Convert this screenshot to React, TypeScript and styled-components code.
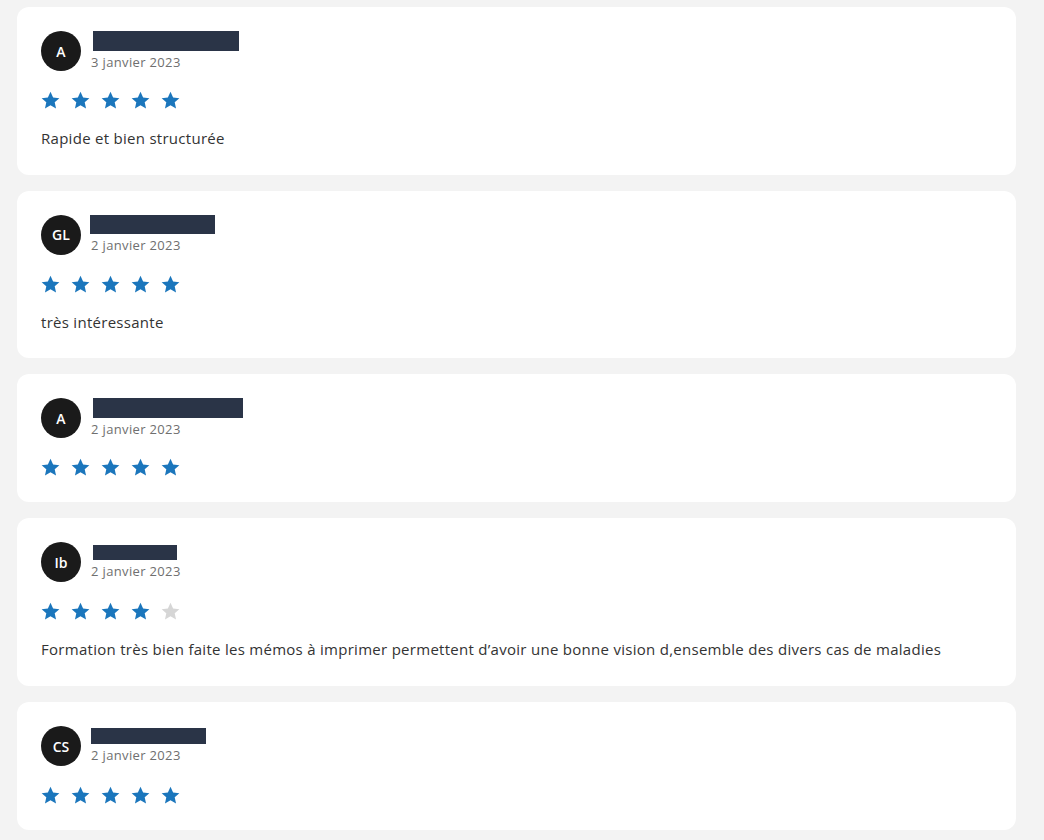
import styled, { createGlobalStyle } from "styled-components";

const Global = createGlobalStyle`
    html, body {
        margin: 0;
        padding: 0;
        background: #f3f3f3;
    }
    body {
        font-family: 'Open Sans', 'Liberation Sans', sans-serif;
        color: #333;
    }
`;

const List = styled.div`
    width: 999px;
    padding: 7px 0 10px 17px;
    display: flex;
    flex-direction: column;
    gap: 16px;
`;

const Card = styled.article`
    background: #fff;
    border-radius: 12px;
    padding: 24px 24px 25px;
    display: flex;
    flex-direction: column;
`;

const Head = styled.div`
    display: flex;
    align-items: center;
    gap: 10px;
`;

const Avatar = styled.div`
    width: 40px;
    height: 40px;
    border-radius: 50%;
    background: #1a1a1a;
    color: #fff;
    font-size: 14px;
    font-weight: 600;
    display: flex;
    align-items: center;
    justify-content: center;
    flex-shrink: 0;
`;

const Who = styled.div`
    display: flex;
    flex-direction: column;
    gap: 2px;
`;

const NameBar = styled.div<{ $w: number; $h: number; $x: number }>`
    width: ${p => p.$w}px;
    height: ${p => p.$h}px;
    margin-left: ${p => p.$x}px;
    background: #2a3447;
`;

const Date = styled.span`
    font-size: 13px;
    letter-spacing: 0.35px;
    color: #6f6f6f;
    line-height: 18px;
`;

const Stars = styled.div`
    display: flex;
    gap: 11px;
    margin-top: 20px;
    height: 19px;
`;

const Comment = styled.p`
    margin: 18px 0 0;
    font-size: 15px;
    letter-spacing: 0.28px;
    line-height: 21.7px;
    color: #333;
`;

const Star = ({ on }: { on: boolean }) => (
    <svg width="19" height="19" viewBox="0 0 24 24">
        <path
            d="M12 1l3.3 7.2 7.9.8-5.9 5.3 1.7 7.8L12 18.1l-7 4 1.7-7.8L.8 9l7.9-.8z"
            fill={on ? "#1b76bc" : "#d6d6d6"}
        />
    </svg>
);

const reviews = [
    { init: "A", bar: [146, 20, 2], date: "3 janvier 2023", rate: 5, text: "Rapide et bien structurée" },
    { init: "GL", bar: [125, 19, -1], date: "2 janvier 2023", rate: 5, text: "très intéressante" },
    { init: "A", bar: [150, 20, 2], date: "2 janvier 2023", rate: 5, text: "" },
    { init: "Ib", bar: [84, 15, 2], date: "2 janvier 2023", rate: 4, text: "Formation très bien faite les mémos à imprimer permettent d’avoir une bonne vision d,ensemble des divers cas de maladies" },
    { init: "CS", bar: [115, 16, 0], date: "2 janvier 2023", rate: 5, text: "" },
];

export default function App() {
    return (
        <>
            <Global />
            <List>
                {reviews.map((r, i) => (
                    <Card key={i}>
                        <Head>
                            <Avatar>{r.init}</Avatar>
                            <Who>
                                <NameBar $w={r.bar[0]} $h={r.bar[1]} $x={r.bar[2]} />
                                <Date>{r.date}</Date>
                            </Who>
                        </Head>
                        <Stars>
                            {[0, 1, 2, 3, 4].map(n => <Star key={n} on={n < r.rate} />)}
                        </Stars>
                        {r.text && <Comment>{r.text}</Comment>}
                    </Card>
                ))}
            </List>
        </>
    );
}
